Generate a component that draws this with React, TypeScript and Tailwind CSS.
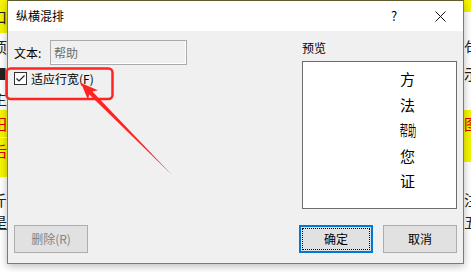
import React from "react";

type Row = {
  h: string;
  l: string;
  r: string;
  lc?: string;
  rc?: string;
  lcol?: string;
  rcol?: string;
  al?: string;
};

const rows: Row[] = [
  { h: "h-[33px]", l: "bg-[#f5f500]", r: "bg-[linear-gradient(#f5f500_12px,#ffffff_12px)]", lc: "口", lcol: "text-[#222]" },
  { h: "h-[27px]", l: "bg-white", r: "bg-white", lc: "项", rc: "句", lcol: "text-[#222]", rcol: "text-[#222]" },
  { h: "h-[26px]", l: "bg-white", r: "bg-white", lc: "■", rc: "示", lcol: "text-[#222]", rcol: "text-[#222]" },
  { h: "h-[24px]", l: "bg-white", r: "bg-white", lc: "主", lcol: "text-[#222]" },
  { h: "h-[27px]", l: "bg-[#f5f500]", r: "bg-[#f5f500]", lc: "田", rc: "图", lcol: "text-[#e00000]", rcol: "text-[#e00000]" },
  { h: "h-[40px]", l: "bg-[#f5f500] border-t border-[#fafad0]", r: "bg-[linear-gradient(#f5f500_25px,#ffffff_25px)]", lc: "后", lcol: "text-[#e00000]", al: "items-start pt-[5px]" },
  { h: "h-[11px]", l: "bg-white", r: "bg-white" },
  { h: "h-[22px]", l: "bg-white", r: "bg-white", lc: "斤", rc: "注", lcol: "text-[#222]", rcol: "text-[#222]" },
  { h: "h-[22px]", l: "bg-white", r: "bg-white", lc: "是", rc: "五", lcol: "text-[#222] underline decoration-[#2050c0]", rcol: "text-[#222]" },
  { h: "h-[40px]", l: "bg-white", r: "bg-white" },
];

function Backdrop() {
  return (
    <div className="flex flex-col w-[471px] h-[272px]">
      {rows.map((row, i) => (
        <div key={i} className={`flex ${row.h} shrink-0 w-full bg-white`}>
          <div className={`w-[7px] h-full overflow-hidden flex ${row.al ?? "items-center"} ${row.l}`}>
            {row.lc && (
              <span className={`ml-[-8px] text-[15px] leading-[15px] whitespace-nowrap ${row.lcol}`}>{row.lc}</span>
            )}
          </div>
          <div className="flex-1" />
          <div className={`w-[8px] h-full overflow-hidden flex items-center ${row.r}`}>
            {row.rc && (
              <span className={`ml-[1px] text-[15px] leading-[15px] whitespace-nowrap ${row.rcol}`}>{row.rc}</span>
            )}
          </div>
        </div>
      ))}
    </div>
  );
}

function Btn({ children, disabled }: { children: React.ReactNode; disabled?: boolean }) {
  return (
    <div
      className={`w-[74px] h-[28px] border border-[#adadad] bg-[#e1e1e1] flex items-center justify-center text-[12px] leading-[16px] ${
        disabled ? "text-[#838383]" : "text-black"
      }`}
    >
      {children}
    </div>
  );
}

export default function App() {
  return (
    <div className="relative w-[471px] h-[272px] overflow-hidden bg-white font-['Noto_Sans_CJK_SC','Noto_Sans',sans-serif]">
      <Backdrop />

      {/* Dialog window */}
      <div className="absolute left-[7px] top-0 w-[457px] h-[264px] flex flex-col border border-[#7a7a7a] border-t-[#5f5d2e] bg-[#f0f0f0] shadow-[0_2px_8px_rgba(0,0,0,0.28)]">
        {/* Title bar */}
        <div className="h-[30px] bg-white flex items-center">
          <div className="pl-[8px] text-[12px] leading-[16px] text-black flex-1">纵横混排</div>
          <div className="w-[46px] h-full flex items-center justify-center text-[13px] text-black">?</div>
          <div className="w-[46px] h-full flex items-center justify-center">
            <svg width="11" height="11" viewBox="0 0 11 11">
              <path d="M0.5 0.5 L10.5 10.5 M10.5 0.5 L0.5 10.5" stroke="#111" strokeWidth="1" />
            </svg>
          </div>
        </div>

        {/* Content */}
        <div className="flex-1 flex flex-col px-[6px] pt-[8px] pb-[9px]">
          <div className="flex justify-between items-start">
            {/* Left column */}
            <div className="flex flex-col pt-[1px]">
              <div className="flex items-center h-[25px]">
                <div className="w-[36px] text-[12px] leading-[16px] text-black">文本:</div>
                <div className="w-[137px] h-[25px] border border-[#ababab] bg-[#f0f0f0] shadow-[inset_-1px_-1px_0_#ffffff] flex items-center pl-[3px] text-[12px] leading-[16px] text-[#6d6d6d]">
                  帮助
                </div>
              </div>
              <div className="flex items-center h-[13px] mt-[7px]">
                <div className="w-[13px] h-[13px] border border-[#333333] bg-white flex items-center justify-center">
                  <svg width="11" height="11" viewBox="0 0 11 11">
                    <path d="M1.5 5.5 L4 8 L9.5 2.5" stroke="#222" strokeWidth="1.2" fill="none" />
                  </svg>
                </div>
                <div className="ml-[4px] text-[12px] leading-[16px] text-black">适应行宽(F)</div>
              </div>
            </div>

            {/* Right column */}
            <div className="w-[155px] flex flex-col">
              <div className="h-[18px] leading-[18px] text-[12px] text-black">预览</div>
              <div className="mt-[4px] h-[148px] border border-[#6d6d6d] bg-white pt-[4px] pl-[97px]">
                <div className="flex flex-col w-[15px] text-[15px] leading-[25.5px] text-black">
                  <div className="flex justify-center">方</div>
                  <div className="flex justify-center">法</div>
                  <div className="flex justify-center">
                    <span className="inline-block whitespace-nowrap scale-x-[0.55]">帮助</span>
                  </div>
                  <div className="flex justify-center">您</div>
                  <div className="flex justify-center">证</div>
                </div>
              </div>
            </div>
          </div>

          {/* Buttons */}
          <div className="flex justify-between mt-[16px]">
            <Btn disabled>删除(R)</Btn>
            <div className="flex gap-[10px]">
              <div className="w-[74px] h-[28px] border-2 border-[#0078d7] bg-[#e1e1e1] flex">
                <div className="flex-1 m-[1px] border border-dotted border-black flex items-center justify-center text-[12px] leading-[16px] text-black">
                  确定
                </div>
              </div>
              <Btn>取消</Btn>
            </div>
          </div>
        </div>
      </div>

      {/* Annotation overlay */}
      <svg className="absolute left-0 top-0 pointer-events-none" width="471" height="272" viewBox="0 0 471 272">
        <rect x="6.5" y="68.5" width="106" height="30.5" rx="4" fill="none" stroke="#ff2424" strokeWidth="2.5" />
        <polygon
          points="81,83 97.9,90.2 92.4,91.4 172,175 89.3,94.5 88,100"
          fill="#ff2424"
        />
      </svg>
    </div>
  );
}
